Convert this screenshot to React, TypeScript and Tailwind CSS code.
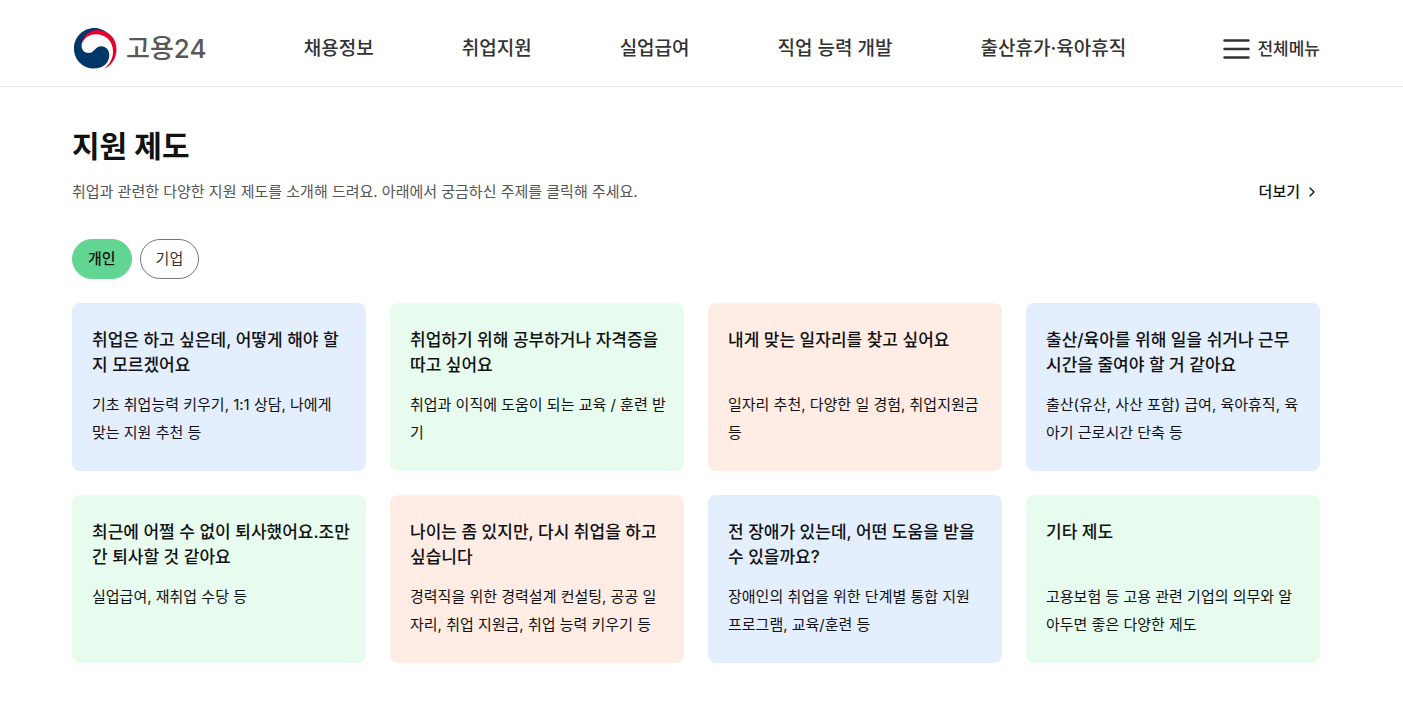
import { useState } from 'react'
import { ChevronRight } from 'lucide-react'

interface Topic {
  title: string
  description: string
  color: string
}

const MENU = ['채용정보', '취업지원', '실업급여', '직업 능력 개발', '출산휴가·육아휴직']

const TABS = ['개인', '기업']

const BLUE = 'bg-[#e3eeff]'
const GREEN = 'bg-[#e7fcef]'
const PEACH = 'bg-[#ffece4]'

// line breaks in the texts are kept by whitespace-pre-line
const TOPICS: Topic[] = [
  {
    title: '취업은 하고 싶은데, 어떻게 해야 할\n지 모르겠어요',
    description: '기초 취업능력 키우기, 1:1 상담, 나에게\n맞는 지원 추천 등',
    color: BLUE,
  },
  {
    title: '취업하기 위해 공부하거나 자격증을\n따고 싶어요',
    description: '취업과 이직에 도움이 되는 교육 / 훈련 받\n기',
    color: GREEN,
  },
  {
    title: '내게 맞는 일자리를 찾고 싶어요',
    description: '일자리 추천, 다양한 일 경험, 취업지원금\n등',
    color: PEACH,
  },
  {
    title: '출산/육아를 위해 일을 쉬거나 근무\n시간을 줄여야 할 거 같아요',
    description: '출산(유산, 사산 포함) 급여, 육아휴직, 육\n아기 근로시간 단축 등',
    color: BLUE,
  },
  {
    title: '최근에 어쩔 수 없이 퇴사했어요.조만\n간 퇴사할 것 같아요',
    description: '실업급여, 재취업 수당 등',
    color: GREEN,
  },
  {
    title: '나이는 좀 있지만, 다시 취업을 하고\n싶습니다',
    description: '경력직을 위한 경력설계 컨설팅, 공공 일\n자리, 취업 지원금, 취업 능력 키우기 등',
    color: PEACH,
  },
  {
    title: '전 장애가 있는데, 어떤 도움을 받을\n수 있을까요?',
    description: '장애인의 취업을 위한 단계별 통합 지원\n프로그램, 교육/훈련 등',
    color: BLUE,
  },
  {
    title: '기타 제도',
    description: '고용보험 등 고용 관련 기업의 의무와 알\n아두면 좋은 다양한 제도',
    color: GREEN,
  },
]

function Logo() {
  return (
    <a href="#" className="flex items-center gap-2">
      <svg width="46" height="44" viewBox="0 0 46 44" aria-hidden="true">
        <path
          d="M35 5.5C31 2.6 27 1 22.600 1C11 1 2 10 2 21.500C2 33 11 41.500 22 41.500C29.500 41.500 35.500 37.500 37 31C38.500 25 35 19.300 29 19.300C23.500 19.300 22.500 26 16.500 26C12.500 26 9.600 23 9.600 19C9.600 12 16 6.500 24 5Z"
          fill="#003668"
        />
        <path
          d="M9.600 17C11 8.500 17.500 3 25.500 3C36.500 3 44.500 11.500 44.500 22C44.500 31 40 38.500 32 42C38 37 41 31 41 24.500C41 14.500 34 7.300 23.500 7.300C17.500 7.300 12 11 9.600 17Z"
          fill="#e4032e"
        />
      </svg>
      <span className="text-[26px] leading-8 font-medium text-[#595757]">고용24</span>
    </a>
  )
}

function Header() {
  return (
    <header className="border-b border-[#ebebeb]">
      <div className="flex h-[86px] items-center justify-between pt-3 pr-[83px] pl-[72px]">
        <Logo />
        <nav className="flex gap-[88px]">
          {MENU.map((item) => (
            <a key={item} href="#" className="text-[19px] leading-7 font-medium text-[#333]">
              {item}
            </a>
          ))}
        </nav>
        <button type="button" className="flex items-center gap-[7px] text-[17px] leading-6 font-medium text-[#333]">
          <svg width="27" height="20" viewBox="0 0 27 20" fill="none" aria-hidden="true">
            <path d="M1.500 1.500H25.500M1.500 10H25.500M1.500 18.500H25.500" stroke="#333" strokeWidth="2.5" strokeLinecap="round" />
          </svg>
          전체메뉴
        </button>
      </div>
    </header>
  )
}

function TopicCard({ topic }: { topic: Topic }) {
  return (
    <a href="#" className={`block rounded-lg pt-[25px] pr-3 pb-6 pl-5 whitespace-pre-line ${topic.color}`}>
      <h3 className="min-h-[50px] text-[17px] leading-[25px] font-medium text-[#111]">{topic.title}</h3>
      <p className="mt-[13px] min-h-14 text-[15px] leading-7 text-[#111]">{topic.description}</p>
    </a>
  )
}

export default function App() {
  const [tab, setTab] = useState(TABS[0])

  return (
    <div className="min-h-screen bg-white font-[Inter,'Noto_Sans_CJK_KR',sans-serif]">
      <Header />
      <main className="pt-10 pr-[83px] pb-11 pl-[72px]">
        <h2 className="text-[30px] leading-[38px] font-bold text-[#111]">지원 제도</h2>
        <div className="mt-[15px] flex items-center justify-between">
          <p className="text-[15px] leading-6 text-[#555]">
            취업과 관련한 다양한 지원 제도를 소개해 드려요. 아래에서 궁금하신 주제를 클릭해 주세요.
          </p>
          <a href="#" className="flex items-center gap-1 text-[15px] leading-6 font-medium text-[#111]">
            더보기
            <ChevronRight size={16} />
          </a>
        </div>

        <div className="mt-[35px] flex gap-2">
          {TABS.map((name) => (
            <button
              key={name}
              type="button"
              onClick={() => setTab(name)}
              className={`h-10 rounded-full border px-[15px] text-[15px] leading-6 ${
                name === tab
                  ? 'border-[#63d592] bg-[#63d592] font-medium text-[#111]'
                  : 'border-[#767676] bg-white text-[#333]'
              }`}
            >
              {name}
            </button>
          ))}
        </div>

        <div className="mt-6 grid grid-cols-4 gap-6">
          {TOPICS.map((topic) => (
            <TopicCard key={topic.title} topic={topic} />
          ))}
        </div>
      </main>
    </div>
  )
}
